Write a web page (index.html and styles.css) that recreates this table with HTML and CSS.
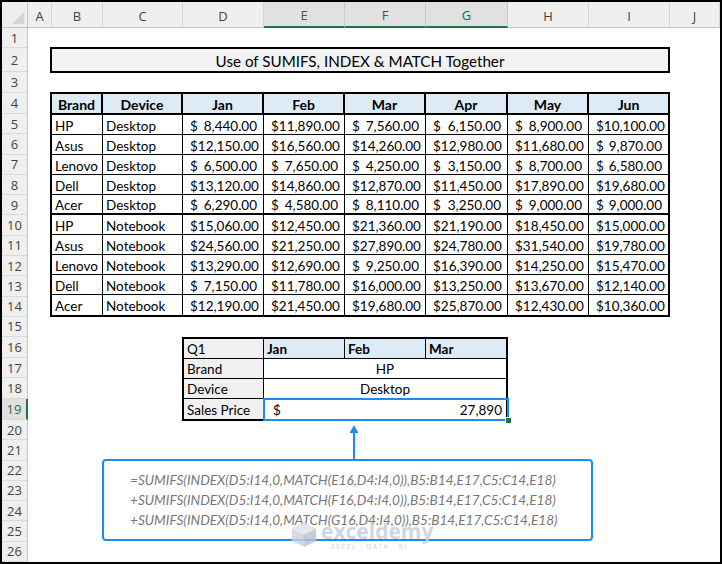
FILE: index.html
```html
<!DOCTYPE html>
<html>
<head>
<meta charset="utf-8">
<link rel="stylesheet" href="styles.css">
</head>
<body>
<div class="frame">
  <div class="sheet">
    <div class="corner"><svg class="tri" width="12" height="12" viewBox="0 0 12 12"><polygon points="12,0 12,12 0,12" fill="#d3d3d3"/></svg></div>
    <div class="ch">A</div>
    <div class="ch">B</div>
    <div class="ch">C</div>
    <div class="ch">D</div>
    <div class="ch sel">E</div>
    <div class="ch sel">F</div>
    <div class="ch sel">G</div>
    <div class="ch">H</div>
    <div class="ch">I</div>
    <div class="ch">J</div>

    <div class="rh">1</div><div class="rh">2</div><div class="rh">3</div><div class="rh">4</div>
    <div class="rh">5</div><div class="rh">6</div><div class="rh">7</div><div class="rh">8</div>
    <div class="rh">9</div><div class="rh">10</div><div class="rh">11</div><div class="rh">12</div>
    <div class="rh">13</div><div class="rh">14</div><div class="rh">15</div><div class="rh">16</div>
    <div class="rh">17</div><div class="rh">18</div><div class="rh sel">19</div><div class="rh">20</div>
    <div class="rh">21</div><div class="rh">22</div><div class="rh">23</div><div class="rh">24</div>
    <div class="rh">25</div><div class="rh">26</div>

    <div class="title">Use of SUMIFS, INDEX &amp; MATCH Together</div>

    <div class="data">
      <div class="c h">Brand</div><div class="c h">Device</div><div class="c h">Jan</div><div class="c h">Feb</div><div class="c h">Mar</div><div class="c h">Apr</div><div class="c h">May</div><div class="c h">Jun</div>

      <div class="c">HP</div><div class="c">Desktop</div>
      <div class="c m"><span>$</span><span>8,440.00</span></div><div class="c m"><span>$</span><span>11,890.00</span></div><div class="c m"><span>$</span><span>7,560.00</span></div><div class="c m"><span>$</span><span>6,150.00</span></div><div class="c m"><span>$</span><span>8,900.00</span></div><div class="c m"><span>$</span><span>10,100.00</span></div>

      <div class="c">Asus</div><div class="c">Desktop</div>
      <div class="c m"><span>$</span><span>12,150.00</span></div><div class="c m"><span>$</span><span>16,560.00</span></div><div class="c m"><span>$</span><span>14,260.00</span></div><div class="c m"><span>$</span><span>12,980.00</span></div><div class="c m"><span>$</span><span>11,680.00</span></div><div class="c m"><span>$</span><span>9,870.00</span></div>

      <div class="c">Lenovo</div><div class="c">Desktop</div>
      <div class="c m"><span>$</span><span>6,500.00</span></div><div class="c m"><span>$</span><span>7,650.00</span></div><div class="c m"><span>$</span><span>4,250.00</span></div><div class="c m"><span>$</span><span>3,150.00</span></div><div class="c m"><span>$</span><span>8,700.00</span></div><div class="c m"><span>$</span><span>6,580.00</span></div>

      <div class="c">Dell</div><div class="c">Desktop</div>
      <div class="c m"><span>$</span><span>13,120.00</span></div><div class="c m"><span>$</span><span>14,860.00</span></div><div class="c m"><span>$</span><span>12,870.00</span></div><div class="c m"><span>$</span><span>11,450.00</span></div><div class="c m"><span>$</span><span>17,890.00</span></div><div class="c m"><span>$</span><span>19,680.00</span></div>

      <div class="c">Acer</div><div class="c">Desktop</div>
      <div class="c m"><span>$</span><span>6,290.00</span></div><div class="c m"><span>$</span><span>4,580.00</span></div><div class="c m"><span>$</span><span>8,110.00</span></div><div class="c m"><span>$</span><span>3,250.00</span></div><div class="c m"><span>$</span><span>9,000.00</span></div><div class="c m"><span>$</span><span>9,000.00</span></div>

      <div class="c">HP</div><div class="c">Notebook</div>
      <div class="c m"><span>$</span><span>15,060.00</span></div><div class="c m"><span>$</span><span>12,450.00</span></div><div class="c m"><span>$</span><span>21,360.00</span></div><div class="c m"><span>$</span><span>21,190.00</span></div><div class="c m"><span>$</span><span>18,450.00</span></div><div class="c m"><span>$</span><span>15,000.00</span></div>

      <div class="c">Asus</div><div class="c">Notebook</div>
      <div class="c m"><span>$</span><span>24,560.00</span></div><div class="c m"><span>$</span><span>21,250.00</span></div><div class="c m"><span>$</span><span>27,890.00</span></div><div class="c m"><span>$</span><span>24,780.00</span></div><div class="c m"><span>$</span><span>31,540.00</span></div><div class="c m"><span>$</span><span>19,780.00</span></div>

      <div class="c">Lenovo</div><div class="c">Notebook</div>
      <div class="c m"><span>$</span><span>13,290.00</span></div><div class="c m"><span>$</span><span>12,690.00</span></div><div class="c m"><span>$</span><span>9,250.00</span></div><div class="c m"><span>$</span><span>16,390.00</span></div><div class="c m"><span>$</span><span>14,250.00</span></div><div class="c m"><span>$</span><span>15,470.00</span></div>

      <div class="c">Dell</div><div class="c">Notebook</div>
      <div class="c m"><span>$</span><span>7,150.00</span></div><div class="c m"><span>$</span><span>11,780.00</span></div><div class="c m"><span>$</span><span>16,000.00</span></div><div class="c m"><span>$</span><span>13,250.00</span></div><div class="c m"><span>$</span><span>13,670.00</span></div><div class="c m"><span>$</span><span>12,140.00</span></div>

      <div class="c">Acer</div><div class="c">Notebook</div>
      <div class="c m"><span>$</span><span>12,190.00</span></div><div class="c m"><span>$</span><span>21,450.00</span></div><div class="c m"><span>$</span><span>19,680.00</span></div><div class="c m"><span>$</span><span>25,870.00</span></div><div class="c m"><span>$</span><span>12,430.00</span></div><div class="c m"><span>$</span><span>10,360.00</span></div>
    </div>

    <div class="q">
      <div class="c lab top">Q1</div>
      <div class="c mon top">Jan</div>
      <div class="c mon top">Feb</div>
      <div class="c mon top last">Mar</div>

      <div class="c lab">Brand</div>
      <div class="c val last">HP</div>

      <div class="c lab">Device</div>
      <div class="c val last">Desktop</div>

      <div class="c lab bot">Sales Price</div>
      <div class="c val money last bot"><span>$</span><span>27,890</span><i class="selbox"></i><i class="handle"></i></div>
    </div>

    <div class="arrow">
      <svg width="12" height="41" viewBox="0 0 12 41"><polygon points="6,5 1.5,13 10.5,13" fill="#1a8cf0"/><line x1="6" y1="12" x2="6" y2="39" stroke="#1a8cf0" stroke-width="2"/></svg>
    </div>

    <div class="formula">
      <div>=SUMIFS(INDEX(D5:I14,0,MATCH(E16,D4:I4,0)),B5:B14,E17,C5:C14,E18)</div>
      <div>+SUMIFS(INDEX(D5:I14,0,MATCH(F16,D4:I4,0)),B5:B14,E17,C5:C14,E18)</div>
      <div>+SUMIFS(INDEX(D5:I14,0,MATCH(G16,D4:I4,0)),B5:B14,E17,C5:C14,E18)</div>
    </div>
  </div>

  <div class="watermark">
    <svg width="28" height="27" viewBox="0 0 30 28"><polygon points="15,1 28,8 28,21 15,27 2,21 2,8" fill="#c9d1df"/><polygon points="15,1 28,8 15,14 2,8" fill="#dfe4ec"/><polygon points="15,14 28,8 28,21 15,27" fill="#b7c1d3"/></svg>
    <div class="wm-text">
      <div class="wm-big">exceldemy</div>
      <div class="wm-small">EXCEL · DATA · BI</div>
    </div>
  </div>
</div>
</body>
</html>
```

FILE: styles.css
```css
* {
  box-sizing: border-box;
}

body {
  margin: 0;
  background: #fff;
}

.frame {
  position: relative;
  width: 722px;
  height: 564px;
  border: 2px solid #000;
  background: #fff;
  overflow: hidden;
  font-family: Lato, "Open Sans", sans-serif;
  color: #000;
}

.sheet {
  display: grid;
  grid-template-columns: 26px 24px 51px 80px 81px 81px 81px 82px 81px 81px 50px;
  grid-template-rows: 26px 20px 24px 21px 21px repeat(10, 20.3px) 20px repeat(4, 20.75px) repeat(7, 20.29px);
}

/* headers */
.corner {
  grid-row: 1;
  grid-column: 1;
  background: #efefef;
  border-right: 1px solid #c6c6c6;
  border-bottom: 1px solid #c6c6c6;
  position: relative;
}

.tri {
  position: absolute;
  right: 3px;
  bottom: 3px;
}

.ch {
  grid-row: 1;
  background: #efefef;
  border-right: 1px solid #d6d6d6;
  border-bottom: 1px solid #c6c6c6;
  display: flex;
  align-items: center;
  justify-content: center;
  padding-top: 2px;
  font-family: "Open Sans", sans-serif;
  font-size: 13px;
  color: #444;
}

.ch.sel {
  background: #e1e1e1;
  border-bottom: 2px solid #217346;
  color: #1f6b45;
  border-right-color: #c9c9c9;
}

.rh {
  grid-column: 1;
  background: #efefef;
  border-right: 1px solid #c6c6c6;
  border-bottom: 1px solid #dadada;
  display: flex;
  align-items: center;
  justify-content: center;
  font-family: "Open Sans", sans-serif;
  font-size: 13px;
  color: #444;
}

.rh.sel {
  background: #e1e1e1;
  border-right: 2px solid #217346;
  color: #1f6b45;
}

/* title */
.title {
  grid-column: 3 / 11;
  grid-row: 3;
  margin: -1px 0 -1px -2px;
  border: 2px solid #000;
  background: #f2f2f2;
  display: flex;
  align-items: center;
  justify-content: center;
  font-size: 15.2px;
  padding-top: 1px;
}

/* cells */
.c {
  display: flex;
  align-items: center;
  border-right: 1px solid #000;
  border-bottom: 1px solid #000;
  padding: 2px 3px 0;
  font-size: 13.5px;
  white-space: nowrap;
}

.m {
  justify-content: space-between;
  padding: 2px 6px 0 7px;
}

/* main table */
.data {
  grid-column: 3 / 11;
  grid-row: 5 / 16;
  align-self: start;
  margin: -1px 0 0 -2px;
  height: 225px;
  display: grid;
  grid-template-columns: 53px 80px 81px 81px 81px 82px 81px 81px;
  grid-template-rows: 23px repeat(9, 20px) 22px;
}

.data > .c:nth-child(8n+1) {
  border-left: 2px solid #000;
}

.data > .c:nth-child(8n) {
  border-right: 2px solid #000;
}

.data > .c:nth-last-child(-n+8) {
  border-bottom: 2px solid #000;
}

.data > .c:nth-child(n+41):nth-child(-n+48) {
  border-bottom: 2px solid #000;
}

.data > .h {
  justify-content: center;
  font-weight: 700;
  font-size: 14px;
  background: #ddebf7;
  border-top: 2px solid #000;
  border-bottom: 2px solid #000;
  border-right: 2px solid #000;
}

/* lookup table */
.q {
  grid-column: 5 / 9;
  grid-row: 17 / 21;
  align-self: start;
  margin-left: -1px;
  height: 84px;
  display: grid;
  grid-template-columns: 82px 81px 81px 82px;
  grid-template-rows: 22px 20px 20px 22px;
}

.q .lab {
  background: #f0f0f0;
  border-left: 2px solid #000;
}

.q .top {
  border-top: 2px solid #000;
}

.q .bot {
  border-bottom: 2px solid #000;
}

.q .last {
  border-right: 2px solid #000;
}

.q .mon {
  background: #ddebf7;
  font-weight: 700;
}

.q .val {
  grid-column: span 3;
  justify-content: center;
}

.q .money {
  position: relative;
  justify-content: space-between;
  padding: 2px 4px 0 9px;
}

.selbox {
  position: absolute;
  top: -1px;
  left: -1px;
  right: -3px;
  bottom: -2px;
  border: 2px solid #1a8cf0;
}

.handle {
  position: absolute;
  right: -6px;
  bottom: -5px;
  width: 7px;
  height: 7px;
  background: #217346;
  border: 1px solid #fff;
}

/* arrow */
.arrow {
  grid-column: 7;
  grid-row: 21 / 23;
  margin-left: 3px;
  display: flex;
  align-items: flex-start;
}

/* formula */
.formula {
  grid-column: 4 / 10;
  grid-row: 23 / 27;
  align-self: start;
  margin: -2px -4px 0 -1px;
  height: 82px;
  border: 2px solid #1a8cf0;
  border-radius: 4px;
  padding: 9px 0 0 26px;
  color: #777;
  font-style: italic;
  font-size: 13.6px;
  line-height: 20px;
  white-space: nowrap;
}

/* watermark */
.watermark {
  position: absolute;
  left: 288px;
  top: 519px;
  display: flex;
  align-items: flex-start;
  gap: 3px;
  opacity: 0.8;
}

.wm-text {
  display: flex;
  flex-direction: column;
}

.wm-big {
  font-family: "Open Sans", sans-serif;
  font-weight: 700;
  font-size: 21px;
  line-height: 21px;
  color: #c3cde0;
}

.wm-small {
  font-family: "Open Sans", sans-serif;
  font-size: 6.5px;
  line-height: 9px;
  letter-spacing: 1.5px;
  color: #c9c9c9;
  padding-left: 10px;
}
```
